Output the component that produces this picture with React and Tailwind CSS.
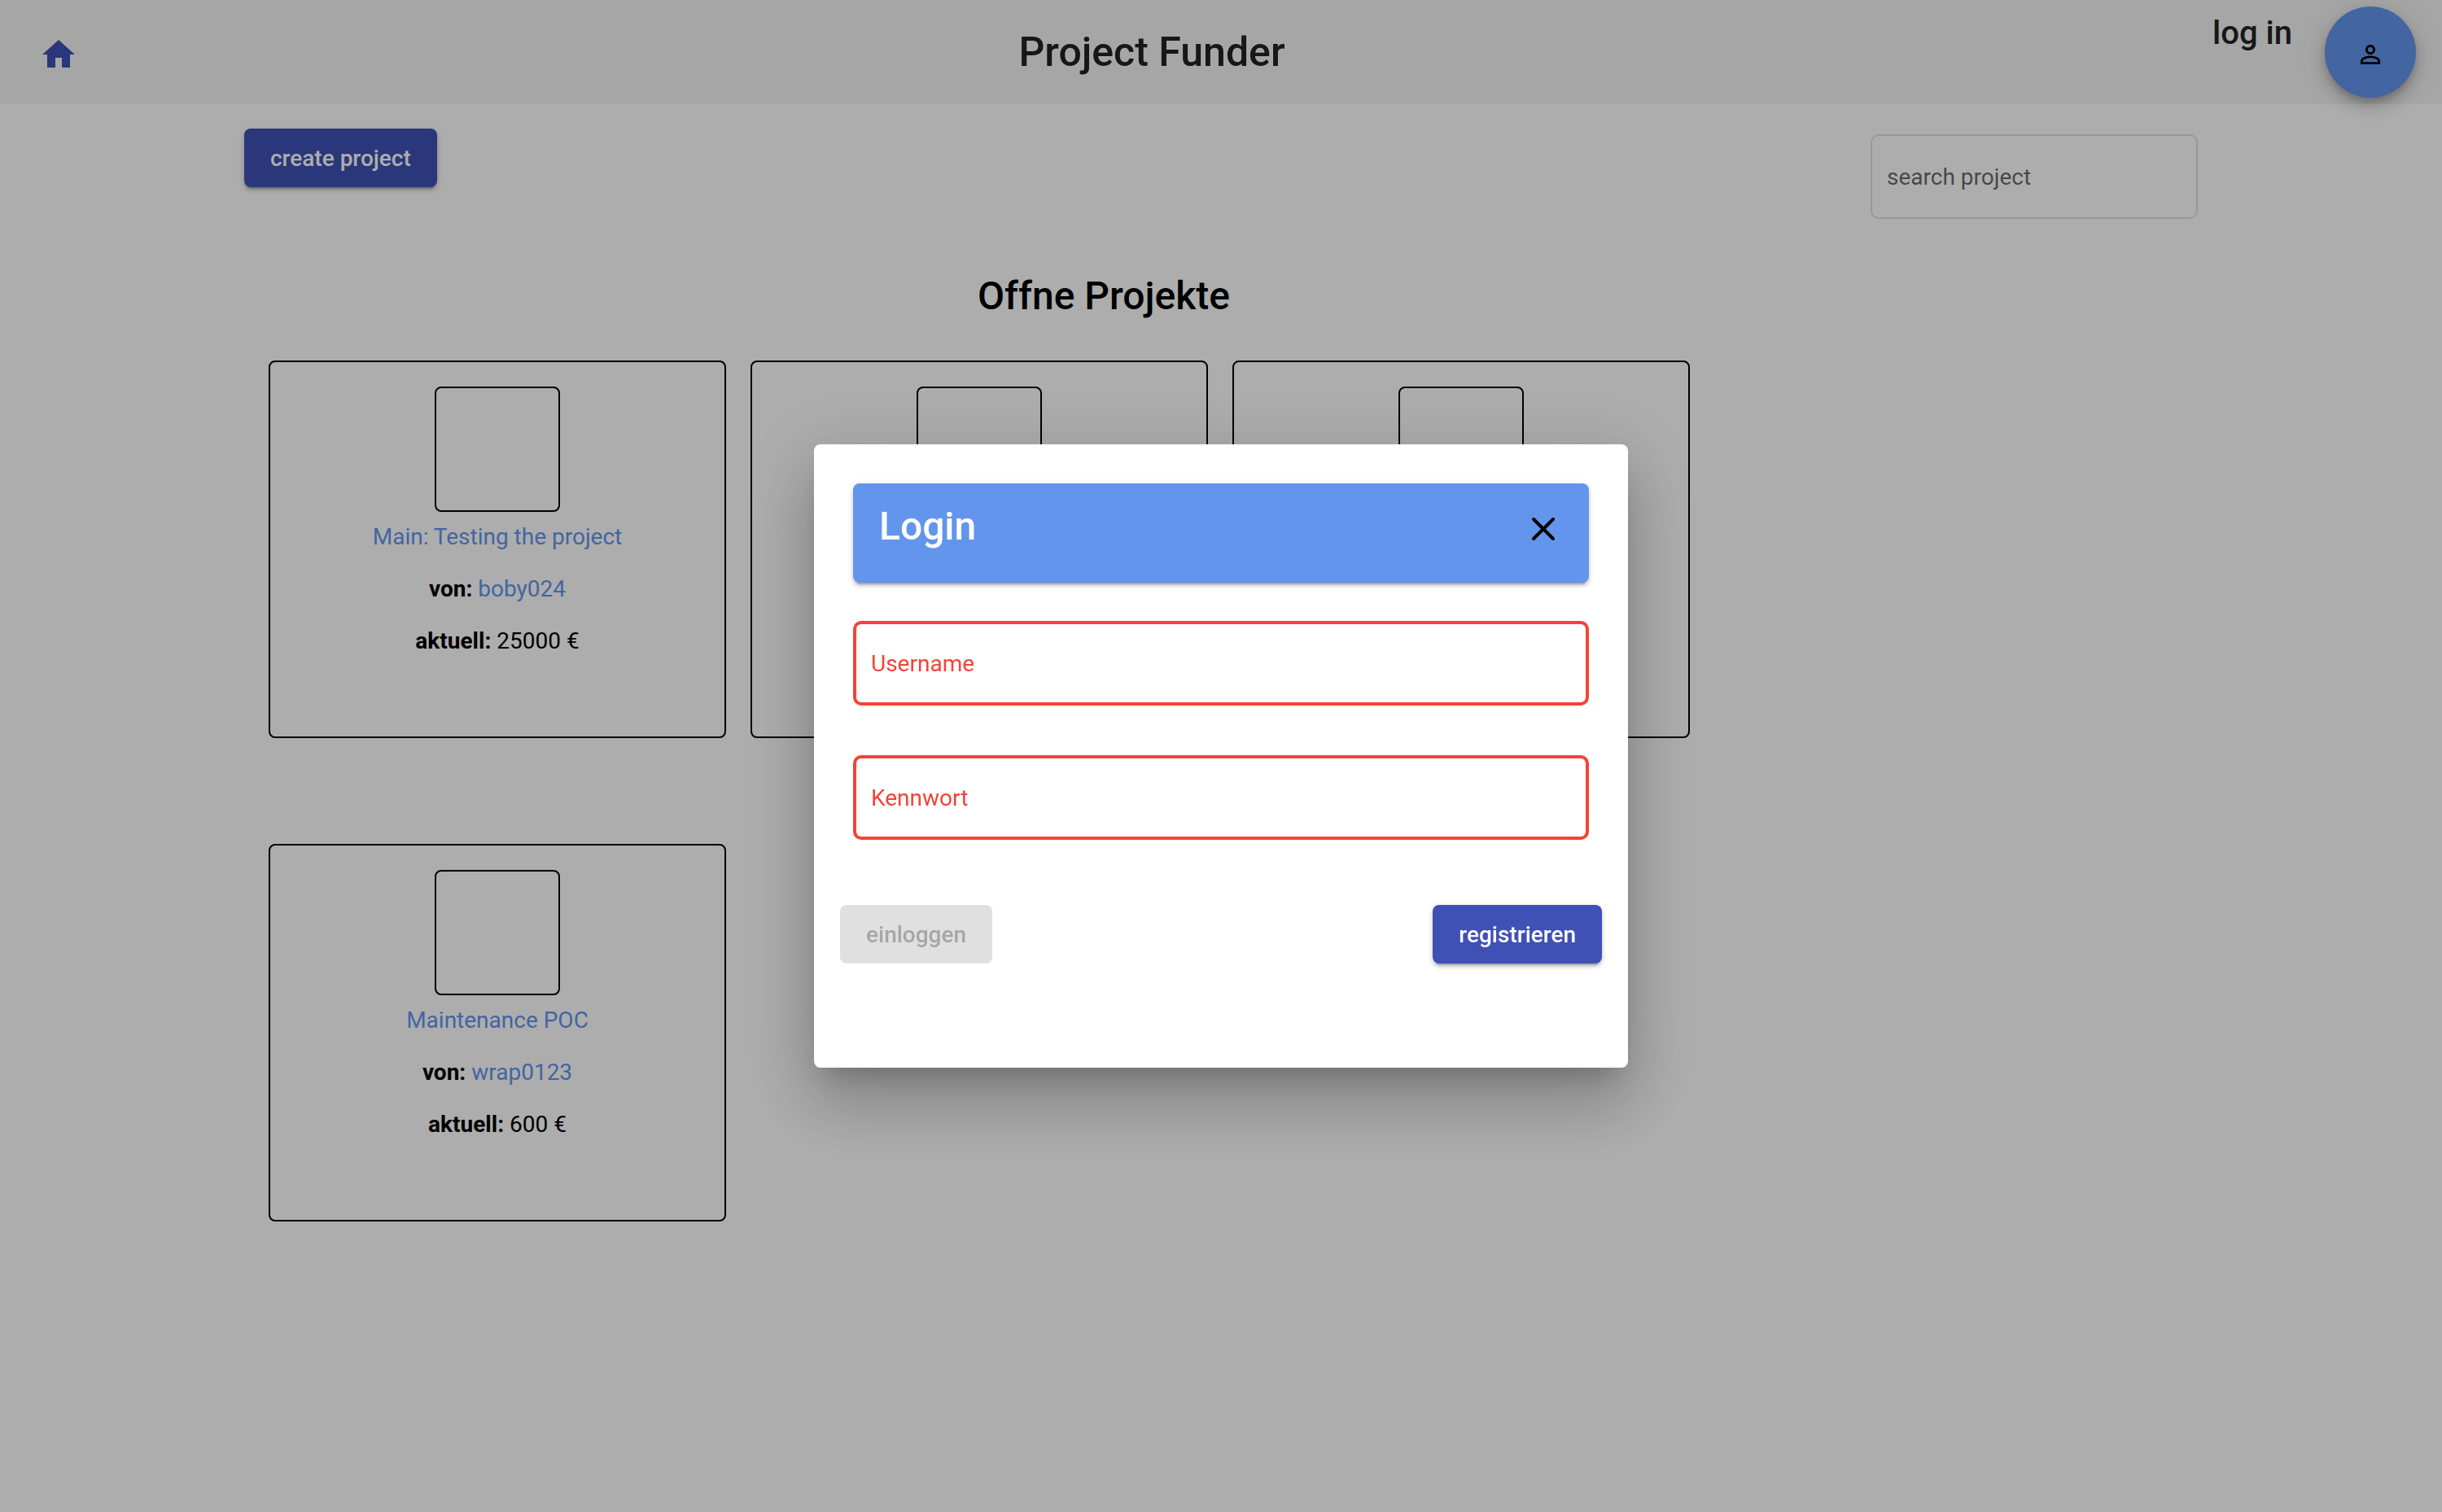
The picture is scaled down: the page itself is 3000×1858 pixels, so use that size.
import React from "react";

const RAISED =
  "shadow-[0_6px_2px_-4px_rgba(0,0,0,0.2),0_4px_4px_0_rgba(0,0,0,0.14),0_2px_10px_0_rgba(0,0,0,0.12)]";

const projects = [
  { title: "Main: Testing the project", owner: "boby024", amount: "25000 €" },
  {},
  {},
  { title: "Maintenance POC", owner: "wrap0123", amount: "600 €" },
];

function HomeIcon() {
  return (
    <svg viewBox="0 0 24 24" className="size-12" fill="currentColor" aria-hidden="true">
      <path d="M10 20v-6h4v6h5v-8h3L12 3 2 12h3v8z" />
    </svg>
  );
}

function PersonIcon() {
  return (
    <svg viewBox="0 0 24 24" className="size-9" fill="currentColor" aria-hidden="true">
      <path d="M12 5.9c1.16 0 2.1.94 2.1 2.1s-.94 2.1-2.1 2.1S9.9 9.16 9.9 8s.94-2.1 2.1-2.1m0 9c2.97 0 6.1 1.46 6.1 2.1v1.1H5.9V17c0-.64 3.13-2.1 6.1-2.1M12 4C9.79 4 8 5.79 8 8s1.79 4 4 4 4-1.79 4-4-1.79-4-4-4zm0 9c-2.67 0-8 1.34-8 4v3h16v-3c0-2.66-5.33-4-8-4z" />
    </svg>
  );
}

function CloseIcon() {
  return (
    <svg viewBox="0 0 32 32" className="size-8" fill="none" stroke="currentColor" strokeWidth="4" strokeLinecap="round" aria-hidden="true">
      <path d="M4 4 28 28M28 4 4 28" />
    </svg>
  );
}

function Toolbar() {
  return (
    <header className="flex h-32 items-center justify-between bg-[#f5f5f5] px-8 text-[#222222]">
      <a href="#home" aria-label="Home" className="flex size-20 items-center justify-center pt-1.5 text-[#3f51b5]">
        <HomeIcon />
      </a>
      <h1 className="text-[50px] leading-[64px] font-medium">Project Funder</h1>
      <div className="flex h-full items-center gap-10">
        <span className="self-start text-[40px] leading-[82px] font-medium">log in</span>
        <button
          type="button"
          aria-label="Account"
          className="flex size-28 items-center justify-center rounded-full bg-[#6495ed] pt-1.5 text-black shadow-[0_6px_10px_-2px_rgba(0,0,0,0.2),0_12px_20px_0_rgba(0,0,0,0.14),0_2px_36px_0_rgba(0,0,0,0.12)]"
        >
          <PersonIcon />
        </button>
      </div>
    </header>
  );
}

function ProjectCard({ title, owner, amount }) {
  return (
    <li className="flex h-[464px] w-[562px] flex-col items-center rounded-lg border-2 border-black pt-[30px]">
      <div className="size-[154px] shrink-0 rounded-lg border-2 border-black" />
      {title && (
        <div className="mt-[15px] flex flex-col items-center gap-8 text-[28px] leading-[32px]">
          <a href="#project" className="text-[#6495ed]">{title}</a>
          <p>
            <b className="font-bold">von:</b>{" "}
            <a href="#user" className="text-[#6495ed]">{owner}</a>
          </p>
          <p>
            <b className="font-bold">aktuell:</b> {amount}
          </p>
        </div>
      )}
    </li>
  );
}

function LoginField({ label, type, name }) {
  return (
    <input
      type={type}
      name={name}
      aria-label={label}
      placeholder={label}
      className="h-[104px] w-full rounded-[10px] border-4 border-[#f44336] bg-white px-[18px] text-[28px] text-[#f44336] outline-none placeholder:text-[#f44336] placeholder:opacity-100"
    />
  );
}

function LoginDialog() {
  return (
    <div className="fixed inset-0 flex items-center justify-center bg-black/32">
      <form
        role="dialog"
        aria-label="Login"
        className="w-1/3 min-w-[1000px] rounded-lg bg-white px-8 pt-12 pb-32 shadow-[0_22px_30px_-14px_rgba(0,0,0,0.2),0_48px_76px_6px_rgba(0,0,0,0.14),0_18px_92px_16px_rgba(0,0,0,0.12)]"
      >
        <div className="px-4">
          <div className={`flex h-[122px] items-start justify-between rounded-lg bg-[#6495ed] px-8 pt-5 ${RAISED}`}>
            <h2 className="text-[48px] leading-[66px] font-medium text-white">Login</h2>
            <button type="button" aria-label="Close" className="flex h-[72px] w-12 items-center justify-center text-black">
              <CloseIcon />
            </button>
          </div>
          <div className="mt-[47px] flex flex-col gap-[61px]">
            <LoginField label="Username" type="text" name="username" />
            <LoginField label="Kennwort" type="password" name="password" />
          </div>
        </div>
        <div className="mt-20 flex justify-between text-[28px] font-medium">
          <button type="submit" disabled className="h-[72px] rounded-lg bg-[#e0e0e0] px-8 pt-0.5 text-[#a6a6a6]">
            einloggen
          </button>
          <button type="button" className={`h-[72px] rounded-lg bg-[#3f51b5] px-8 pt-0.5 text-white ${RAISED}`}>
            registrieren
          </button>
        </div>
      </form>
    </div>
  );
}

export default function App() {
  return (
    <div className="min-h-screen bg-white font-[Roboto,sans-serif] text-black">
      <Toolbar />
      <main className="px-[10%] pt-[30px]">
        <div className="flex items-start justify-between">
          <button type="button" className={`h-[72px] rounded-lg bg-[#3f51b5] px-8 pt-0.5 text-[28px] font-medium text-white ${RAISED}`}>
            create project
          </button>
          <input
            type="search"
            aria-label="search project"
            placeholder="search project"
            className="mt-[7px] h-[104px] w-[402px] rounded-[10px] border-2 border-black/12 bg-transparent px-[18px] text-[28px] placeholder:text-black/60 placeholder:opacity-100"
          />
        </div>
        <section className="w-[88%]">
          <h2 className="mt-[62px] text-center text-[48px] leading-[66px] font-medium">Offne Projekte</h2>
          <ul className="mt-[46px] flex flex-wrap gap-x-[30px] gap-y-[130px] pl-[30px]">
            {projects.map((project, i) => (
              <ProjectCard key={i} {...project} />
            ))}
          </ul>
        </section>
      </main>
      <LoginDialog />
    </div>
  );
}
